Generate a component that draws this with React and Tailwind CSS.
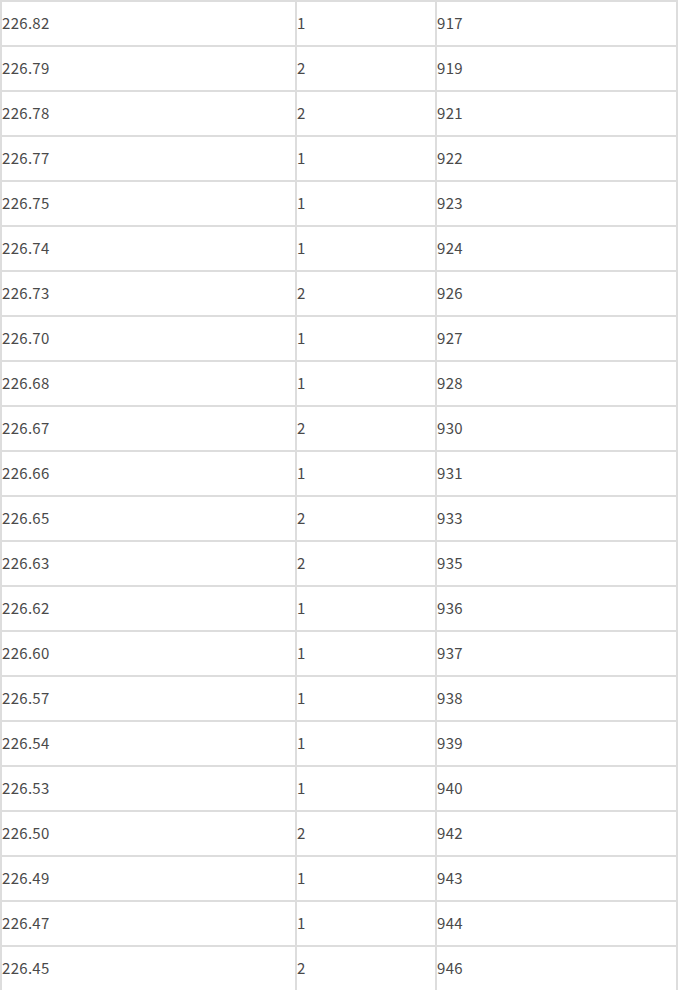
import React from 'react';

const rows = [
  ['226.82', '1', '917'],
  ['226.79', '2', '919'],
  ['226.78', '2', '921'],
  ['226.77', '1', '922'],
  ['226.75', '1', '923'],
  ['226.74', '1', '924'],
  ['226.73', '2', '926'],
  ['226.70', '1', '927'],
  ['226.68', '1', '928'],
  ['226.67', '2', '930'],
  ['226.66', '1', '931'],
  ['226.65', '2', '933'],
  ['226.63', '2', '935'],
  ['226.62', '1', '936'],
  ['226.60', '1', '937'],
  ['226.57', '1', '938'],
  ['226.54', '1', '939'],
  ['226.53', '1', '940'],
  ['226.50', '2', '942'],
  ['226.49', '1', '943'],
  ['226.47', '1', '944'],
  ['226.45', '2', '946'],
];

export default function App() {
  return (
    <div className="bg-white w-[678px] min-h-screen">
      <div
        className="grid grid-cols-[295px_140px_241px] border border-[#dddddd] text-[15px] text-[#4a4a4a]"
        style={{ fontFamily: '"Noto Sans CJK SC", "Noto Sans", sans-serif' }}
      >
        {rows.map((r, i) => (
          <React.Fragment key={i}>
            {r.map((cell, j) => (
              <div key={j} className="h-[45px] border border-[#dddddd] flex items-center pb-[2px] leading-none tracking-[0.3px]">
                {cell}
              </div>
            ))}
          </React.Fragment>
        ))}
      </div>
    </div>
  );
}
